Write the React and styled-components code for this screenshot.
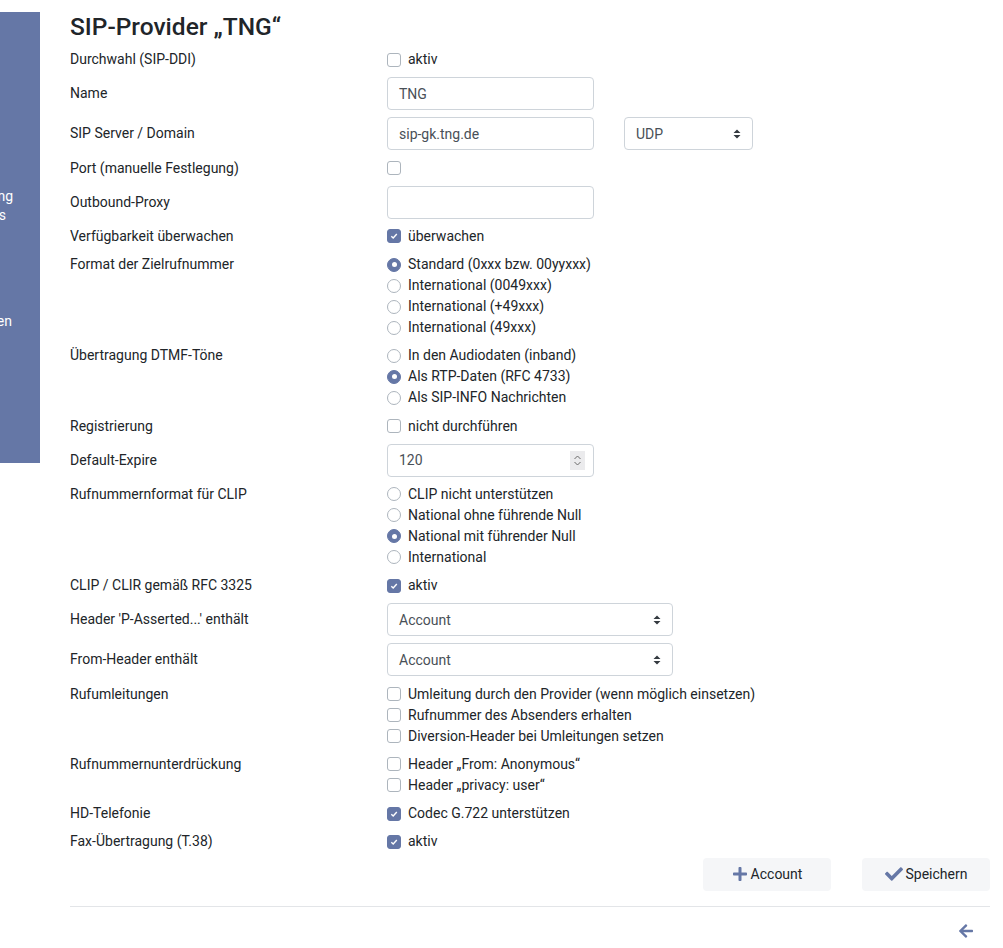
import React from "react";
import styled, { createGlobalStyle } from "styled-components";
import { FaPlus, FaCheck, FaArrowLeft } from "react-icons/fa";

const accent = "#6577a6";

const GlobalStyle = createGlobalStyle`
  body {
    margin: 0;
    background: #fff;
    font-family: Roboto, "Liberation Sans", sans-serif;
    font-size: 14px;
    color: #212529;
  }
`;

const Page = styled.div`
  display: flex;
  align-items: flex-start;
  width: 1003px;
`;

const Sidebar = styled.nav`
  width: 40px;
  height: 451px;
  margin-top: 12px;
  background: ${accent};
  overflow: hidden;
  display: flex;
  flex-direction: column;
  padding-top: 175px;
  box-sizing: border-box;
`;

const SideItem = styled.div`
  width: 200px;
  margin-left: ${(p) => p.end - 200}px;
  text-align: right;
  color: #fff;
  font-size: 14px;
  line-height: 19px;
  margin-top: ${(p) => p.gap || 0}px;
  white-space: nowrap;
`;

const Main = styled.main`
  width: 920px;
  margin-left: 30px;
  padding-top: 12px;
`;

const Title = styled.h2`
  margin: 0 0 8px;
  font-size: 24.5px;
  font-weight: 500;
  line-height: 29px;
  color: #212529;
`;

const Form = styled.div`
  display: flex;
  flex-direction: column;
  gap: 7.2px;
`;

const Row = styled.div`
  display: grid;
  grid-template-columns: 317px 1fr;
  align-items: start;
`;

const Label = styled.div`
  line-height: 21px;
  padding-top: ${(p) => (p.field ? 6 : 0)}px;
`;

const Controls = styled.div`
  display: flex;
  align-items: center;
  gap: 30px;
`;

const Stack = styled.div`
  display: flex;
  flex-direction: column;
`;

const Option = styled.label`
  display: flex;
  align-items: center;
  line-height: 21px;
  height: 21px;
  color: #212529;
`;

const Box = styled.span`
  width: 14px;
  height: 14px;
  box-sizing: border-box;
  margin: 0 7px 0 0;
  border-radius: ${(p) => (p.round ? "50%" : "3px")};
  border: 1px solid ${(p) => (p.on ? accent : "#adb5bd")};
  background: ${(p) => (p.on ? accent : "#fff")};
  display: flex;
  align-items: center;
  justify-content: center;
  flex-shrink: 0;
`;

const Dot = styled.span`
  width: 5px;
  height: 5px;
  border-radius: 50%;
  background: #fff;
`;

const Field = styled.div`
  position: relative;
  width: ${(p) => p.w}px;
  height: 33px;
  box-sizing: border-box;
  border: 1px solid #ced4da;
  border-radius: 4px;
  background: #fff;
  padding: 0 11px;
  display: flex;
  align-items: center;
  justify-content: space-between;
  color: #495057;
  font-size: 14px;
`;

const Spinner = styled.span`
  width: 15px;
  height: 19px;
  background: #ebebed;
  display: flex;
  align-items: center;
  justify-content: center;
  margin-right: -3px;
`;

const ButtonBar = styled.div`
  display: flex;
  justify-content: flex-end;
  gap: 31px;
  margin-top: 5.5px;
`;

const Button = styled.button`
  width: 128px;
  height: 33px;
  border: none;
  border-radius: 4px;
  background: #f5f6f8;
  font-family: Roboto, "Liberation Sans", sans-serif;
  font-size: 14px;
  color: #212529;
  display: flex;
  align-items: center;
  justify-content: center;
  gap: 3px;
  svg {
    color: ${accent};
  }
`;

const Rule = styled.hr`
  margin: 15px 0 0;
  border: none;
  border-top: 1px solid #e3e5e8;
`;

const Footer = styled.div`
  display: flex;
  justify-content: flex-end;
  padding: 16px 16px 0 0;
  color: ${accent};
`;

const Caret = () => (
  <svg width="8" height="12" viewBox="0 0 8 12">
    <path d="M4 1.5 L7.5 5 H0.5 Z M4 10.5 L7.5 7 H0.5 Z" fill="#343a40" />
  </svg>
);

const Chevrons = () => (
  <svg width="9" height="13" viewBox="0 0 9 13" fill="none" stroke="#6b6b6b" strokeWidth="1">
    <path d="M1.5 5 L4.5 2 L7.5 5 M1.5 8 L4.5 11 L7.5 8" />
  </svg>
);

const Tick = () => (
  <svg width="8" height="8" viewBox="0 0 8 8">
    <path d="M1.3 4.2 L3.2 6 L6.8 2" fill="none" stroke="#fff" strokeWidth="1.4" />
  </svg>
);

const Check = ({ on, children }) => (
  <Option>
    <Box on={on}>{on && <Tick />}</Box>
    {children}
  </Option>
);

const Radio = ({ on, children }) => (
  <Option>
    <Box round on={on}>{on && <Dot />}</Box>
    {children}
  </Option>
);

const Radios = ({ items, selected }) => (
  <Stack>
    {items.map((t, i) => (
      <Radio key={i} on={i === selected}>{t}</Radio>
    ))}
  </Stack>
);

const Checks = ({ items }) => (
  <Stack>
    {items.map(([t, on], i) => (
      <Check key={i} on={on}>{t}</Check>
    ))}
  </Stack>
);

const App = () => {
  return (
    <>
      <GlobalStyle />
      <Page>
        <Sidebar>
          <SideItem end={13}>Verwaltung</SideItem>
          <SideItem end={6}>Accounts</SideItem>
          <SideItem end={12} gap={87}>Ansagen</SideItem>
        </Sidebar>
        <Main>
          <Title>SIP-Provider „TNG“</Title>
          <Form>
            <Row>
              <Label>Durchwahl (SIP-DDI)</Label>
              <Check>aktiv</Check>
            </Row>
            <Row>
              <Label field>Name</Label>
              <Field w={207}>TNG</Field>
            </Row>
            <Row>
              <Label field>SIP Server / Domain</Label>
              <Controls>
                <Field w={207}>sip-gk.tng.de</Field>
                <Field w={129}>UDP<Caret /></Field>
              </Controls>
            </Row>
            <Row>
              <Label>Port (manuelle Festlegung)</Label>
              <Check />
            </Row>
            <Row>
              <Label field>Outbound-Proxy</Label>
              <Field w={207} />
            </Row>
            <Row>
              <Label>Verfügbarkeit überwachen</Label>
              <Check on>überwachen</Check>
            </Row>
            <Row>
              <Label>Format der Zielrufnummer</Label>
              <Radios
                selected={0}
                items={[
                  "Standard (0xxx bzw. 00yyxxx)",
                  "International (0049xxx)",
                  "International (+49xxx)",
                  "International (49xxx)",
                ]}
              />
            </Row>
            <Row>
              <Label>Übertragung DTMF-Töne</Label>
              <Radios
                selected={1}
                items={[
                  "In den Audiodaten (inband)",
                  "Als RTP-Daten (RFC 4733)",
                  "Als SIP-INFO Nachrichten",
                ]}
              />
            </Row>
            <Row>
              <Label>Registrierung</Label>
              <Check>nicht durchführen</Check>
            </Row>
            <Row>
              <Label field>Default-Expire</Label>
              <Field w={207}>
                120
                <Spinner><Chevrons /></Spinner>
              </Field>
            </Row>
            <Row>
              <Label>Rufnummernformat für CLIP</Label>
              <Radios
                selected={2}
                items={[
                  "CLIP nicht unterstützen",
                  "National ohne führende Null",
                  "National mit führender Null",
                  "International",
                ]}
              />
            </Row>
            <Row>
              <Label>CLIP / CLIR gemäß RFC 3325</Label>
              <Check on>aktiv</Check>
            </Row>
            <Row>
              <Label field>Header 'P-Asserted...' enthält</Label>
              <Field w={286}>Account<Caret /></Field>
            </Row>
            <Row>
              <Label field>From-Header enthält</Label>
              <Field w={286}>Account<Caret /></Field>
            </Row>
            <Row>
              <Label>Rufumleitungen</Label>
              <Checks
                items={[
                  ["Umleitung durch den Provider (wenn möglich einsetzen)", false],
                  ["Rufnummer des Absenders erhalten", false],
                  ["Diversion-Header bei Umleitungen setzen", false],
                ]}
              />
            </Row>
            <Row>
              <Label>Rufnummernunterdrückung</Label>
              <Checks
                items={[
                  ["Header „From: Anonymous“", false],
                  ["Header „privacy: user“", false],
                ]}
              />
            </Row>
            <Row>
              <Label>HD-Telefonie</Label>
              <Check on>Codec G.722 unterstützen</Check>
            </Row>
            <Row>
              <Label>Fax-Übertragung (T.38)</Label>
              <Check on>aktiv</Check>
            </Row>
          </Form>
          <ButtonBar>
            <Button><FaPlus size={16} />Account</Button>
            <Button><FaCheck size={18} />Speichern</Button>
          </ButtonBar>
          <Rule />
          <Footer>
            <FaArrowLeft size={16} />
          </Footer>
        </Main>
      </Page>
    </>
  );
};

export default App;
